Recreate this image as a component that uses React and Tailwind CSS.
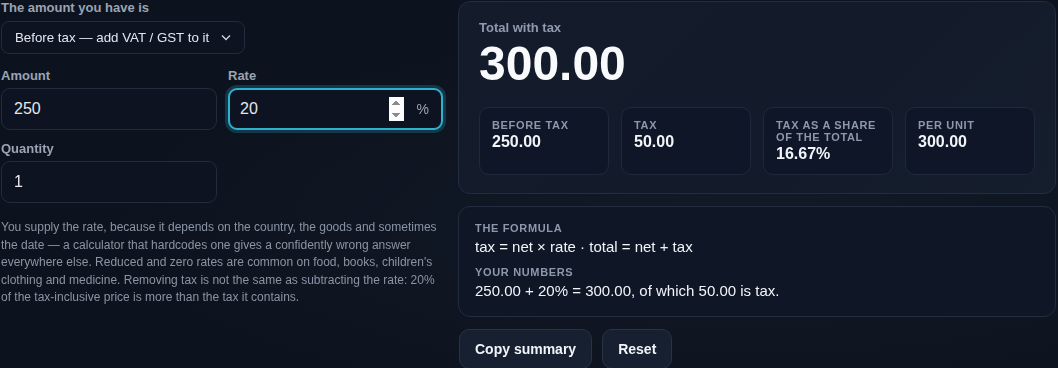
import React, { useState } from 'react';

const fmt = (n) => (Number.isFinite(n) ? n.toFixed(2) : '0.00');

const Stat = ({ label, value }) => (
  <div className="rounded-[10px] border border-[#1e293b] bg-[#0f1627] px-3 pt-[11px] pb-[11px]">
    <div className="text-[11px] font-semibold uppercase leading-[12px] tracking-[0.06em] text-[#8d98ab]">
      {label}
    </div>
    <div className="mt-[2px] text-[16px] font-bold leading-[18px] text-[#f1f5f9]">{value}</div>
  </div>
);

const App = () => {
  const [mode, setMode] = useState('add');
  const [amount, setAmount] = useState('250');
  const [rate, setRate] = useState('20');
  const [qty, setQty] = useState('1');

  const a = parseFloat(amount) || 0;
  const r = (parseFloat(rate) || 0) / 100;
  const q = parseFloat(qty) || 1;
  const net = mode === 'add' ? a : a / (1 + r);
  const tax = net * r;
  const total = net + tax;
  const share = total ? (tax / total) * 100 : 0;

  const reset = () => {
    setMode('add');
    setAmount('250');
    setRate('20');
    setQty('1');
  };

  const copy = () => {
    const text = `${fmt(net)} + ${rate}% = ${fmt(total)}, of which ${fmt(tax)} is tax.`;
    navigator.clipboard?.writeText(text).catch(() => {});
  };

  return (
    <div className="min-h-screen bg-[radial-gradient(ellipse_at_70%_60%,#121a28_0%,#0d131e_60%)] font-['Liberation_Sans',Arial,sans-serif] text-[#e2e8f0]">
      <div className="grid grid-cols-[444px_1fr] gap-[14px] pr-[2px]">
        {/* left column */}
        <div className="flex flex-col pl-[1px]">
          <label className="text-[13px] font-bold leading-[15px] text-[#9aa4b4]">The amount you have is</label>
          <div className="relative mt-[6px] w-[244px]">
            <select
              value={mode}
              onChange={(e) => setMode(e.target.value)}
              className="h-[33px] w-full appearance-none rounded-[8px] border border-[#222c3c] bg-[#0d1320] pl-[13px] pr-8 text-[13.3px] text-[#e2e8f0] outline-none"
            >
              <option value="add">Before tax — add VAT / GST to it</option>
              <option value="remove">After tax — remove VAT / GST from it</option>
            </select>
            <svg
              className="pointer-events-none absolute right-[14px] top-[13px]"
              width="10"
              height="7"
              viewBox="0 0 10 7"
              fill="none"
              stroke="#cbd5e1"
              strokeWidth="1.4"
            >
              <path d="M1 1.5l4 4 4-4" />
            </svg>
          </div>

          <div className="mt-[14px] grid grid-cols-[216px_215px] gap-[11px]">
            <div className="flex flex-col">
              <label className="text-[13px] font-bold leading-[15px] text-[#9aa4b4]">Amount</label>
              <input
                value={amount}
                onChange={(e) => setAmount(e.target.value)}
                className="mt-[5px] h-[42px] rounded-[9px] border border-[#222c3c] bg-[#0d1320] px-[12px] text-[16px] text-[#e5e7eb] outline-none"
              />
            </div>
            <div className="flex flex-col">
              <label className="text-[13px] font-bold leading-[15px] text-[#9aa4b4]">Rate</label>
              <div className="mt-[5px] flex h-[42px] items-center rounded-[9px] border-[2px] border-[#2fb0cf] bg-[#0d1320] pl-[10px] pr-[12px] shadow-[0_0_0_3px_rgba(34,150,180,0.28)]">
                <input
                  type="number"
                  autoFocus
                  value={rate}
                  onChange={(e) => setRate(e.target.value)}
                  className="min-w-0 flex-1 bg-transparent text-[16px] text-[#e5e7eb] outline-none"
                />
                <span className="ml-[13px] text-[14px] text-[#9aa4b4]">%</span>
              </div>
            </div>
          </div>

          <label className="mt-[11px] text-[13px] font-bold leading-[15px] text-[#9aa4b4]">Quantity</label>
          <input
            value={qty}
            onChange={(e) => setQty(e.target.value)}
            className="mt-[5px] h-[42px] w-[216px] rounded-[9px] border border-[#222c3c] bg-[#0d1320] px-[12px] text-[16px] text-[#e5e7eb] outline-none"
          />

          <p className="mt-[16px] text-[12px] leading-[17.5px] text-[#8a94a4]">
            You supply the rate, because it depends on the country, the goods and sometimes the date — a
            calculator that hardcodes one gives a confidently wrong answer everywhere else. Reduced and zero
            rates are common on food, books, children's clothing and medicine. Removing tax is not the same as
            subtracting the rate: 20% of the tax-inclusive price is more than the tax it contains.
          </p>
        </div>

        {/* right column */}
        <div className="flex flex-col">
          <div className="mt-[1px] rounded-[12px] border border-[#222d3f] bg-[linear-gradient(135deg,#141c2c,#131b2a_60%,#151e2d)] px-[20px] pt-[18px] pb-[18px]">
            <div className="text-[13px] font-bold leading-[15px] text-[#8f9aad]">Total with tax</div>
            <div className="mt-[2px] text-[48px] font-bold leading-[54px] text-[#f8fafc]">
              {fmt(total * q)}
            </div>
            <div className="mt-[16px] grid grid-cols-4 gap-[12px]">
              <Stat label="Before tax" value={fmt(net * q)} />
              <Stat label="Tax" value={fmt(tax * q)} />
              <Stat label="Tax as a share of the total" value={`${share.toFixed(2)}%`} />
              <Stat label="Per unit" value={fmt(total)} />
            </div>
          </div>

          <div className="mt-[12px] rounded-[12px] border border-[#222d3f] bg-[#0f1626] px-[16px] pt-[15px] pb-[16px]">
            <div className="text-[11px] font-bold uppercase leading-[13px] tracking-[0.06em] text-[#8d98ab]">
              The formula
            </div>
            <div className="mt-[3px] text-[15px] leading-[18px] text-[#f1f5f9]">
              tax = net × rate · total = net + tax
            </div>
            <div className="mt-[10px] text-[11px] font-bold uppercase leading-[13px] tracking-[0.06em] text-[#8d98ab]">
              Your numbers
            </div>
            <div className="mt-[3px] text-[15px] leading-[18px] text-[#f1f5f9]">
              {fmt(net)} + {rate}% = {fmt(total)}, of which {fmt(tax)} is tax.
            </div>
          </div>

          <div className="mt-[12px] flex gap-[10px] pl-[1px]">
            <button
              onClick={copy}
              className="h-[40px] rounded-[10px] border border-[#283345] bg-[#172030] px-[15px] text-[14px] font-bold text-[#f1f5f9]"
            >
              Copy summary
            </button>
            <button
              onClick={reset}
              className="h-[40px] rounded-[10px] border border-[#283345] bg-[#172030] px-[15px] text-[14px] font-bold text-[#f1f5f9]"
            >
              Reset
            </button>
          </div>
        </div>
      </div>
    </div>
  );
};

export default App;
